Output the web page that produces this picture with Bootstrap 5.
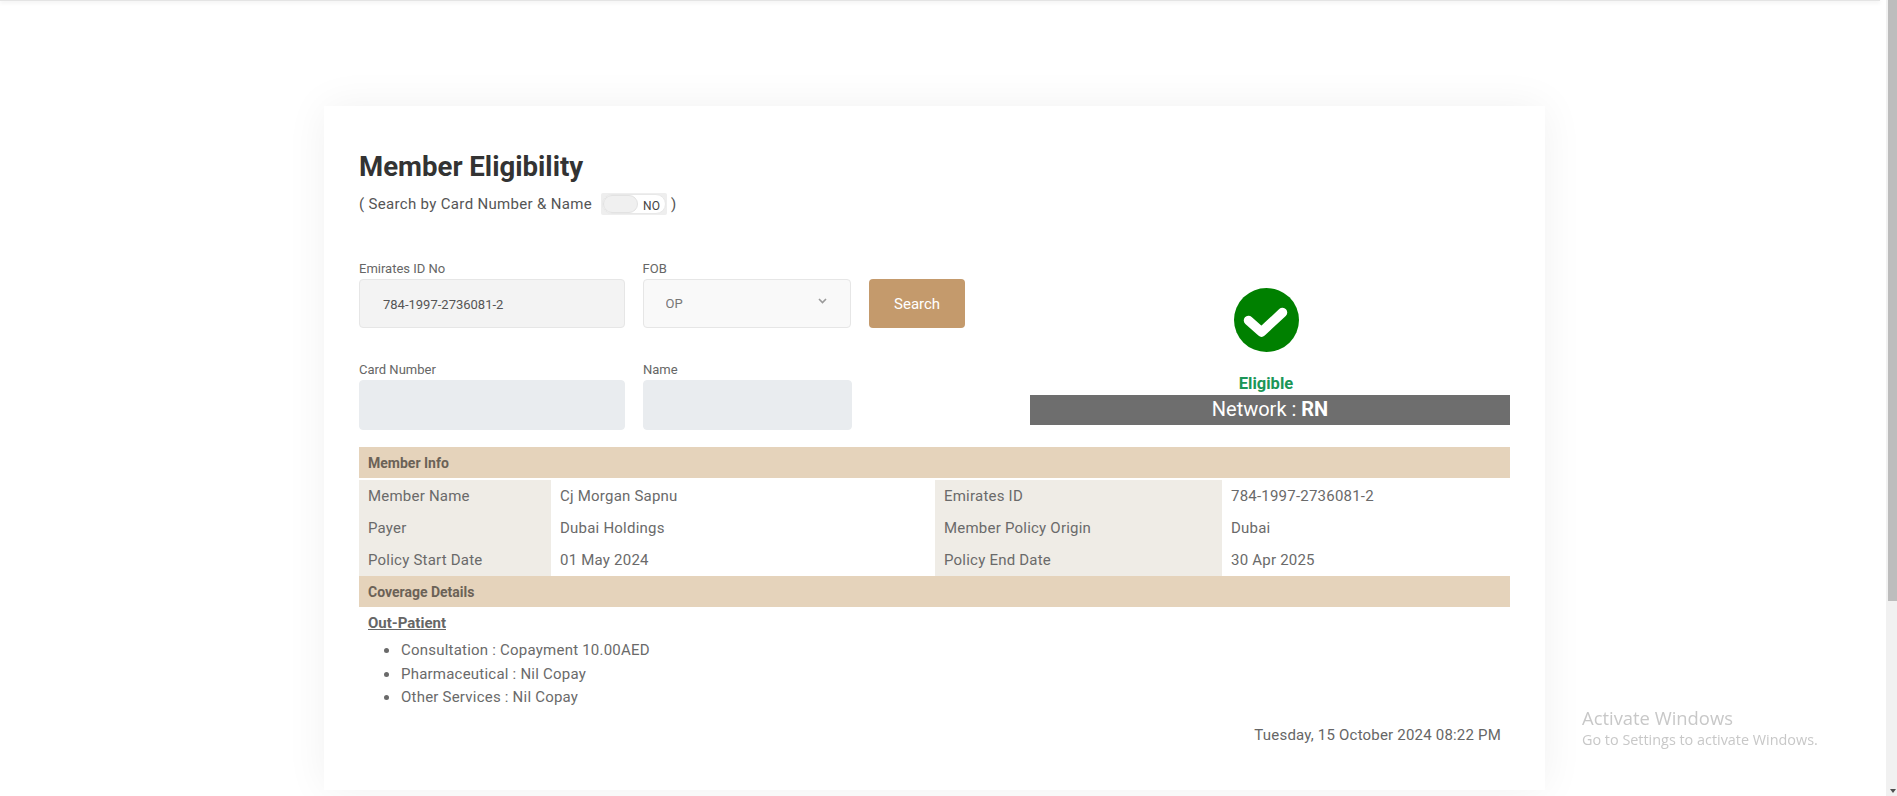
<!DOCTYPE html>
<html lang="en">
<head>
<meta charset="utf-8">
<title>Member Eligibility</title>
<link href="https://cdn.jsdelivr.net/npm/bootstrap@5.3.0/dist/css/bootstrap.min.css" rel="stylesheet">
<style>
html,body{height:796px;overflow:hidden;background:#fff}
body{font-family:Roboto,"Liberation Sans",sans-serif;color:#666;font-size:14px;position:relative}
.top-shadow{height:1px;width:1880px;background:#e4e4e4;box-shadow:0 1px 4px rgba(0,0,0,.18)}
.sheet{width:1221px;height:684px;margin:105px 0 0 324px;background:#fff;box-shadow:0 0 40px rgba(0,0,0,.06);padding:42px 29px 0 35px}
.sheet h1{font-size:27.6px;font-weight:700;color:#333;line-height:38px;margin:0}
.search-hint{font-size:15px;height:26px;margin-top:5px;letter-spacing:.33px;color:#555}
.switch-box{width:66px;height:22px;background:#eee;border-radius:2px;margin:0 4px 0 9px;padding:1px}
.switch-in{width:100%;height:100%;background:#fff;border-radius:10px;border:1px solid #e8e8e8;font-size:12px;color:#444;letter-spacing:0;position:relative;padding-left:40px;line-height:22px}
.switch-knob{width:35px;height:100%;background:#f0f0f0;border-radius:10px;border:1px solid #e2e2e2}
.form-area{margin-top:44px;height:186px}
.form-left{width:606px}
.field-a{width:266px}.field-b{width:209px}
.gap-fields{gap:18px}
.fld-label{font-size:13px;line-height:15px;margin-bottom:3px;color:#666}
.fld-row + .fld-row{margin-top:34px}
.form-control.fld,.form-select.fld{height:49px;border-radius:4px;border:1px solid #e6e6e6;font-size:13px;color:#555;box-shadow:none}
.fld-id{background:#f3f3f3;padding:2px 12px 0 23px}
.fld-sel{background-color:#f9f9f9;padding:1px 36px 0 22px;color:#777!important;background-image:none}
.sel-wrap{position:relative}
.sel-chev{position:absolute;right:24px;bottom:24px;width:9px;height:6px}
.fld-off{background:#e9ecef!important;height:50px!important;border-color:#e9ecef!important}
.btn-find{width:96px;height:49px;background:#c49a6c;color:#fff;border:0;border-radius:4px;font-size:15px;font-weight:400;padding-top:8px;align-self:flex-end}
.btn-find:hover{background:#c49a6c;color:#fff}
.status{width:480px;margin-left:65px;padding-top:27px;text-align:center}
.status-top{width:472px}
.status svg{display:block;margin:0 auto}
.status-ok{font-size:16.5px;font-weight:700;color:#1b9657;line-height:20px;margin:22px 0 1px}
.status-net{background:#6e6e6e;color:#fff;font-size:20px;line-height:28px;height:30px}
.info-table{width:1151px;table-layout:fixed;border-collapse:separate;border-spacing:0;font-size:15px;letter-spacing:.22px}
.info-table th.band{background:#e5d3bb;font-size:14px;font-weight:700;color:#6b6257;height:31px;padding:2px 9px 0;letter-spacing:0}
.info-table td{height:32px;padding:0 9px;vertical-align:middle;color:#6a6a6a}
.info-table td.lab{background:#efece6}
.info-table tr.after-band td{height:34px;padding-top:2px;box-shadow:inset 0 2px 0 #fff}
.cover-title{font-size:15px;font-weight:700;text-decoration:underline;line-height:20px;margin:6px 0 0 9px;color:#666}
.cover-list{margin:5px 0 0;padding-left:42px;font-size:15px;letter-spacing:.22px;color:#6a6a6a}
.cover-list li{height:23.5px;line-height:23.5px}
.cover-list li::marker{font-size:17px}
.stamp{width:1151px;text-align:right;padding-right:9px;margin-top:16px;font-size:15px;letter-spacing:.2px;line-height:20px;color:#666}
.sb{position:fixed;top:0;right:0;width:11px;height:796px;background:#f1f1f1;padding-left:2px}
.sb-thumb{height:601px;background:#bdbdbd}
.sb-arrow{position:absolute;left:4px;bottom:3px;width:0;height:0;border-left:3px solid transparent;border-right:3px solid transparent;border-top:4px solid #505050}
.win-mark{position:fixed;left:1582px;top:706px;font-family:"Open Sans","Liberation Sans",sans-serif;color:#c8c8c8;pointer-events:none}
.win-a{font-size:18.4px;line-height:24px}
.win-b{font-size:14.4px;line-height:20px}
</style>
</head>
<body>
<div class="top-shadow"></div>
<main class="sheet">
  <h1>Member Eligibility</h1>
  <div class="search-hint d-flex align-items-center">( Search by Card Number &amp; Name
    <span class="switch-box d-inline-block"><span class="switch-in d-block"><span class="switch-knob position-absolute top-0 start-0"></span>NO</span></span>)
  </div>
  <div class="form-area d-flex">
    <div class="form-left">
      <div class="fld-row d-flex gap-fields">
        <div class="field-a"><label class="fld-label d-block">Emirates ID No</label><input class="form-control fld fld-id" value="784-1997-2736081-2"></div>
        <div class="field-b sel-wrap"><label class="fld-label d-block">FOB</label><select class="form-select fld fld-sel"><option>OP</option></select><svg class="sel-chev" viewBox="0 0 9 6" aria-hidden="true"><path d="M1 1 L4.5 4.5 L8 1" fill="none" stroke="#9a9a9a" stroke-width="1.6"/></svg></div>
        <button class="btn btn-find" type="button">Search</button>
      </div>
      <div class="fld-row d-flex gap-fields">
        <div class="field-a"><label class="fld-label d-block">Card Number</label><input class="form-control fld fld-off" disabled></div>
        <div class="field-b"><label class="fld-label d-block">Name</label><input class="form-control fld fld-off" disabled></div>
      </div>
    </div>
    <div class="status">
      <div class="status-top">
        <svg width="65" height="64" viewBox="0 0 65 64" aria-hidden="true"><ellipse cx="32.5" cy="32" rx="32.5" ry="32" fill="#008000"/><path d="M14.5 32.5 L27.5 44 L48.5 24.5" fill="none" stroke="#fff" stroke-width="9.5" stroke-linecap="round" stroke-linejoin="round"/></svg>
        <div class="status-ok">Eligible</div>
      </div>
      <div class="status-net">Network : <b>RN</b></div>
    </div>
  </div>
  <table class="info-table">
    <colgroup><col style="width:192px"><col style="width:384px"><col style="width:287px"><col style="width:288px"></colgroup>
    <tr><th class="band" colspan="4">Member Info</th></tr>
    <tr class="after-band"><td class="lab">Member Name</td><td>Cj Morgan Sapnu</td><td class="lab">Emirates ID</td><td>784-1997-2736081-2</td></tr>
    <tr><td class="lab">Payer</td><td>Dubai Holdings</td><td class="lab">Member Policy Origin</td><td>Dubai</td></tr>
    <tr><td class="lab">Policy Start Date</td><td>01 May 2024</td><td class="lab">Policy End Date</td><td>30 Apr 2025</td></tr>
    <tr><th class="band" colspan="4">Coverage Details</th></tr>
  </table>
  <div class="cover-title">Out-Patient</div>
  <ul class="cover-list">
    <li>Consultation : Copayment 10.00AED</li>
    <li>Pharmaceutical : Nil Copay</li>
    <li>Other Services : Nil Copay</li>
  </ul>
  <div class="stamp">Tuesday, 15 October 2024 08:22 PM</div>
</main>
<div class="win-mark"><div class="win-a">Activate Windows</div><div class="win-b">Go to Settings to activate Windows.</div></div>
<div class="sb"><div class="sb-thumb"></div><span class="sb-arrow"></span></div>
<script src="https://cdn.jsdelivr.net/npm/bootstrap@5.3.0/dist/js/bootstrap.bundle.min.js"></script>
</body>
</html>
